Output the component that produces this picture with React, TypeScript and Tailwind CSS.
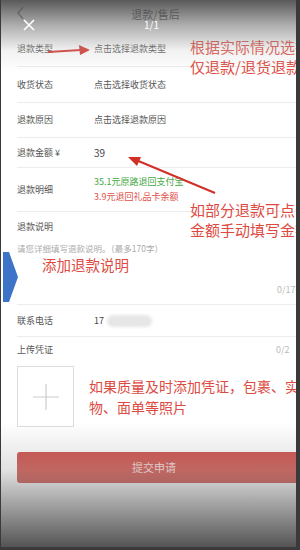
import React from "react";

const Row = ({ label, children, h, className = "" }: { label: string; children?: React.ReactNode; h: string; className?: string }) => (
  <div className={`flex items-center ml-[16px] border-b border-[#ececec] ${h} ${className}`}>
    <div className="w-[77px] shrink-0 text-[9px] text-[#555]">{label}</div>
    <div className="text-[9px] text-[#555]">{children}</div>
  </div>
);

export default function App() {
  return (
    <div className="relative w-[300px] h-[550px] overflow-hidden bg-[#3a3a3a] font-['Noto_Sans_CJK_SC',sans-serif]">
      <div className="absolute left-[1px] top-0 w-[295px] h-[547px] overflow-hidden bg-white">
        {/* nav */}
        <div className="relative h-[31px] flex justify-center pt-[5px]">
          <span className="text-[11px] text-[#444] leading-[18px] pl-[14px]">退款/售后</span>
          <svg className="absolute left-[15px] top-[6px]" width="9" height="14" viewBox="0 0 9 14">
            <path d="M7 1 L2 7 L7 13" fill="none" stroke="#777" strokeWidth="1.3" />
          </svg>
        </div>
        <Row label="退款类型" h="h-[36px]">点击选择退款类型</Row>
        <Row label="收货状态" h="h-[36px]">点击选择收货状态</Row>
        <Row label="退款原因" h="h-[35px]">点击选择退款原因</Row>
        <Row label="退款金额 ¥" h="h-[30px]">
          <span className="text-[10px] text-[#444]">39</span>
        </Row>
        <div className="flex items-center ml-[16px] border-b border-[#ececec] h-[44px]">
          <div className="w-[77px] shrink-0 text-[9px] text-[#555]">退款明细</div>
          <div className="flex flex-col text-[9px] leading-[15px] -mt-[1px]">
            <span className="text-[#43a843]">35.1元原路退回支付宝</span>
            <span className="text-[#e0504a]">3.9元退回礼品卡余额</span>
          </div>
        </div>
        <div className="ml-[16px] border-b border-[#ececec] h-[93px] flex flex-col">
          <div className="text-[9px] text-[#555] mt-[9px] leading-[12px]">退款说明</div>
          <div className="text-[8.5px] text-[#aaa] mt-[9px] leading-[12px] whitespace-nowrap">请您详细填写退款说明。（最多170字）</div>
          <div className="text-[9px] text-[#bbb] mt-[30px] leading-[12px] whitespace-nowrap pl-[260px]">0/170</div>
        </div>
        <div className="flex items-center ml-[16px] border-b border-[#ececec] h-[32px]">
          <div className="w-[77px] shrink-0 text-[9px] text-[#555]">联系电话</div>
          <div className="flex items-center text-[9px] text-[#444]">
            <span className="text-[#444]">17</span>
            <span className="inline-block ml-[3px] w-[45px] h-[12px] rounded-full bg-[#e6e6e6] blur-[1.5px]" />
          </div>
        </div>
        <div className="ml-[16px] flex items-center h-[26px] whitespace-nowrap">
          <div className="w-[259px] shrink-0 text-[9px] text-[#555]">上传凭证</div>
          <div className="text-[9px] text-[#bbb]">0/2</div>
        </div>
        <div className="ml-[16px] mt-[3px] w-[57px] h-[61px] border border-[#ddd] flex items-center justify-center">
          <svg width="26" height="26" viewBox="0 0 26 26">
            <path d="M13 0 V26 M0 13 H26" stroke="#ccc" strokeWidth="1.2" />
          </svg>
        </div>
        <div className="ml-[16px] mt-[25px] w-[290px] h-[31px] rounded-[3px] bg-[#cc433c] flex items-center justify-center">
          <span className="text-[11px] text-[#f6d8d5] pr-[16px]">提交申请</span>
        </div>

        {/* annotations */}
        <svg className="absolute left-0 top-0" width="295" height="547" viewBox="0 0 295 547">
          <path d="M47 52 L80 50" stroke="#d12f28" strokeWidth="2.2" />
          <polygon points="89,50 78,45 79,55" fill="#d12f28" />
          <path d="M214 193 L135 160" stroke="#d12f28" strokeWidth="2" />
          <polygon points="127,157 140,157 136,166" fill="#d12f28" />
          <polygon points="2,252 8,252 17,277 8,302 2,302" fill="#3d74c8" />
        </svg>
        <div className="absolute left-[189px] top-[37px] text-[15px] leading-[20px] text-[#dd4a42] whitespace-nowrap">
          根据实际情况选择<br />仅退款/退货退款
        </div>
        <div className="absolute left-[189px] top-[200px] text-[15px] leading-[20px] text-[#dd4a42] whitespace-nowrap">
          如部分退款可点击<br />金额手动填写金额
        </div>
        <div className="absolute left-[41px] top-[255px] text-[14.5px] leading-[20px] text-[#dd4a42] whitespace-nowrap">
          添加退款说明
        </div>
        <div className="absolute left-[88px] top-[376px] text-[14px] leading-[21px] text-[#dd4a42] whitespace-nowrap">
          如果质量及时添加凭证，包裹、实<br />物、面单等照片
        </div>

        {/* viewer overlays */}
        <div className="absolute inset-x-0 top-0 h-[72px] bg-[linear-gradient(to_bottom,rgba(75,75,75,0.92)_0%,rgba(120,120,120,0.6)_35%,rgba(200,200,200,0.25)_70%,rgba(255,255,255,0)_100%)]" />
        <div className="absolute inset-x-0 bottom-0 h-[125px] bg-[linear-gradient(to_top,rgba(75,75,75,0.95)_0%,rgba(110,110,110,0.7)_30%,rgba(170,170,170,0.35)_62%,rgba(255,255,255,0)_100%)]" />
        <svg className="absolute left-[22px] top-[19px]" width="12" height="12" viewBox="0 0 12 12">
          <path d="M1 1 L11 11 M11 1 L1 11" stroke="#fff" strokeWidth="1.6" />
        </svg>
        <div className="absolute left-[143px] top-[18px] text-[10px] leading-[14px] text-white">1/1</div>
      </div>
    </div>
  );
}
